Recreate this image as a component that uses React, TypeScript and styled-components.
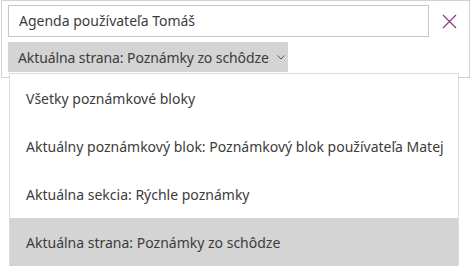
import React from "react";
import styled, { createGlobalStyle } from "styled-components";

const Global = createGlobalStyle`
  html, body { margin: 0; padding: 0; background: #ffffff; }
  body { font-family: "Noto Sans", "Open Sans", sans-serif; color: #333333; }
  * { box-sizing: border-box; }
`;

const Stage = styled.div`
  position: relative;
  width: 471px;
  height: 267px;
  padding: 0 0 0 1px;
`;

const Panel = styled.div`
  width: 469px;
  height: 78px;
  border: 1px solid #d2d2d2;
  padding: 4px 0 0 6px;
  display: flex;
  flex-direction: column;
  align-items: flex-start;
  gap: 5px;
`;

const SearchRow = styled.div`
  display: flex;
  align-items: center;
`;

const SearchBox = styled.div`
  width: 421px;
  height: 32px;
  border: 1px solid #c6c6c6;
  display: flex;
  align-items: center;
  padding: 0 0 1px 10px;
  font-size: 14px;
  color: #3c3c3c;
  white-space: nowrap;
`;

const CloseButton = styled.button`
  width: 40px;
  height: 32px;
  border: none;
  background: transparent;
  display: flex;
  align-items: center;
  justify-content: center;
  padding: 0;
`;

const ScopeButton = styled.div`
  height: 30px;
  background: #d4d4d4;
  display: flex;
  align-items: center;
  padding: 0 3px 0 10px;
  gap: 8px;
  font-size: 14px;
  letter-spacing: -0.1px;
  color: #3c3c3c;
  white-space: nowrap;
`;

const Menu = styled.ul`
  position: absolute;
  left: 9px;
  top: 73px;
  width: 450px;
  margin: 0;
  padding: 0;
  list-style: none;
  background: #fff;
  border: 1px solid #dcdcdc;
  border-bottom: none;
`;

const MenuItem = styled.li<{ $selected?: boolean }>`
  height: 48px;
  display: flex;
  align-items: center;
  padding-left: 16px;
  font-size: 14px;
  color: #3c3c3c;
  white-space: nowrap;
  background: ${(p) => (p.$selected ? "#d4d4d4" : "transparent")};
`;

const items = [
  "Všetky poznámkové bloky",
  "Aktuálny poznámkový blok: Poznámkový blok používateľa Matej",
  "Aktuálna sekcia: Rýchle poznámky",
  "Aktuálna strana: Poznámky zo schôdze",
];

export default function App() {
  return (
    <>
      <Global />
      <Stage>
        <Panel>
          <SearchRow>
            <SearchBox>Agenda používateľa Tomáš</SearchBox>
            <CloseButton aria-label="Zavrieť">
              <svg width="15" height="15" viewBox="0 0 15 15">
                <path d="M1 1 L14 14 M14 1 L1 14" stroke="#8a3a86" strokeWidth="1.2" fill="none" />
              </svg>
            </CloseButton>
          </SearchRow>
          <ScopeButton>
            <span>Aktuálna strana: Poznámky zo schôdze</span>
            <svg width="8" height="5" viewBox="0 0 8 5">
              <path d="M0.5 0.5 L4 4 L7.5 0.5" stroke="#555" strokeWidth="1" fill="none" />
            </svg>
          </ScopeButton>
        </Panel>
        <Menu>
          {items.map((t, i) => (
            <MenuItem key={t} $selected={i === 3}>
              {t}
            </MenuItem>
          ))}
        </Menu>
      </Stage>
    </>
  );
}
